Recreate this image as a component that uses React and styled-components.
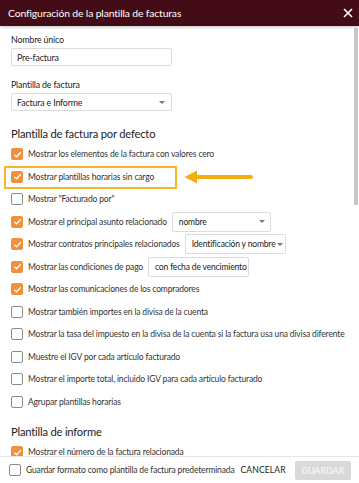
import styled, { createGlobalStyle } from "styled-components";

const Global = createGlobalStyle`
  html, body { margin: 0; padding: 0; background: #fff; }
  body { font-family: Lato, "Noto Sans", sans-serif; color: #333; }
  * { box-sizing: border-box; }
`;

const Dialog = styled.div`
  width: 359px;
  height: 483px;
  display: flex;
  flex-direction: column;
  overflow: hidden;
  background: #fff;
  position: relative;
`;

const Header = styled.div`
  height: 26px;
  flex: none;
  display: flex;
  align-items: center;
  justify-content: space-between;
  padding: 0 6px 0 8px;
  background: #430b16;
  color: #fff;
  font-size: 10.4px;
  letter-spacing: -0.15px;
  box-shadow: 0 1px 3px rgba(0, 0, 0, 0.25);
  position: relative;
  z-index: 1;
`;

const Body = styled.div`
  flex: 1;
  min-height: 0;
  overflow: hidden;
  padding: 8px 0 0 11px;
  letter-spacing: -0.15px;
`;

/* scroll thumb of the form area, drawn over the content */
const ScrollThumb = styled.div`
  position: absolute;
  right: 1px;
  top: 28px;
  width: 4px;
  height: 177px;
  border-radius: 1px;
  background: #c6c6c6;
`;

const Label = styled.div`
  font-size: 8.8px;
  line-height: 12px;
  color: #222;
  margin-bottom: 2px;
`;

const Field = styled.div`
  width: 161px;
  height: 18px;
  border: 1px solid #dcdcdc;
  border-radius: 2px;
  display: flex;
  align-items: center;
  justify-content: space-between;
  padding: 0 6px 0 5px;
  font-size: 8.8px;
  color: #222;
  margin-bottom: ${(p) => p.$mb || 0}px;
`;

const Caret = styled.span`
  width: 0;
  height: 0;
  border-left: 3px solid transparent;
  border-right: 3px solid transparent;
  border-top: 3px solid #777;
  flex: none;
  margin-left: 2px;
`;

const Heading = styled.div`
  font-size: 11.2px;
  line-height: 18px;
  letter-spacing: -0.2px;
  color: #222;
  margin: ${(p) => p.$mt}px 0 0;
`;

const Row = styled.div`
  height: 22.5px;
  display: flex;
  align-items: center;
  gap: 5px;
  font-size: 8.5px;
  color: #333;
  white-space: nowrap;
  position: relative;
`;

const Box = styled.span`
  width: 12px;
  height: 12px;
  flex: none;
  border-radius: 2px;
  border: 1px solid ${(p) => (p.$on ? "#f0913d" : "#8a8a8a")};
  background: ${(p) => (p.$on ? "#f0913d" : "#fff")};
  display: flex;
  align-items: center;
  justify-content: center;
`;

const Highlight = styled.span`
  position: absolute;
  left: -7px;
  top: 0;
  width: 173px;
  height: 23px;
  border: 2px solid #f7b52a;
`;

const Arrow = styled.svg`
  position: absolute;
  left: 173px;
  top: 4px;
`;

const InlineSelect = styled.div`
  height: 20px;
  width: ${(p) => p.$w}px;
  border: 1px solid #dcdcdc;
  border-radius: 2px;
  display: flex;
  align-items: center;
  justify-content: space-between;
  padding: 0 5px 0 6px;
  font-size: 8.5px;
  color: #222;
  overflow: hidden;
`;

const Footer = styled.div`
  height: 27px;
  flex: none;
  display: flex;
  align-items: center;
  padding: 0 8px 0 9px;
  border-top: 1px solid #e6e6e6;
  font-size: 8.5px;
  letter-spacing: -0.15px;
  color: #333;
  white-space: nowrap;
`;

const FooterText = styled.span`
  margin-left: 5px;
`;

const Cancel = styled.span`
  margin-left: 6px;
  font-size: 8.6px;
  color: #222;
  letter-spacing: 0.1px;
`;

const Save = styled.button`
  margin-left: auto;
  width: 56px;
  height: 19px;
  border: none;
  border-radius: 2px;
  background: #d9d9d9;
  color: #f4f4f4;
  font-family: inherit;
  font-size: 8.8px;
  font-weight: 700;
  padding: 0;
`;

const Check = () => (
  <svg width="9" height="9" viewBox="0 0 10 10">
    <path d="M1.5 5.2 L4 7.5 L8.6 2.5" fill="none" stroke="#fff" strokeWidth="1.4" />
  </svg>
);

const Item = ({ on, children, extra }) => (
  <Row>
    <Box $on={on}>{on && <Check />}</Box>
    <span>{children}</span>
    {extra}
  </Row>
);

const Sel = ({ w, children }) => (
  <InlineSelect $w={w}>
    <span>{children}</span>
    <Caret />
  </InlineSelect>
);

export default function App() {
  return (
    <Dialog>
      <Global />
      <Header>
        <span>Configuración de la plantilla de facturas</span>
        <svg width="10" height="10" viewBox="0 0 10 10">
          <path d="M1 1 L9 9 M9 1 L1 9" stroke="#fff" strokeWidth="1.6" />
        </svg>
      </Header>
      <Body>
        <Label>Nombre único</Label>
        <Field $mb={13}>Pre-factura</Field>
        <Label>Plantilla de factura</Label>
        <Field>
          <span>Factura e Informe</span>
          <Caret />
        </Field>
        <Heading $mt={14}>Plantilla de factura por defecto</Heading>
        <Item on>Mostrar los elementos de la factura con valores cero</Item>
        <Row>
          <Highlight />
          <Box $on>
            <Check />
          </Box>
          <span>Mostrar plantillas horarias sin cargo</span>
          <Arrow width="70" height="14" viewBox="0 0 70 14">
            <path d="M11 7 H67" stroke="#f5ad0f" strokeWidth="4" strokeLinecap="round" />
            <path d="M13 0.5 L0.5 7 L13 13.5 Z" fill="#f5ad0f" />
          </Arrow>
        </Row>
        <Item>Mostrar "Facturado por"</Item>
        <Item on extra={<Sel w={99}>nombre</Sel>}>
          Mostrar el principal asunto relacionado
        </Item>
        <Item on extra={<Sel w={101}>Identificación y nombre</Sel>}>
          Mostrar contratos principales relacionados
        </Item>
        <Item on extra={<Sel w={101}>con fecha de vencimiento</Sel>}>
          Mostrar las condiciones de pago
        </Item>
        <Item on>Mostrar las comunicaciones de los compradores</Item>
        <Item>Mostrar también importes en la divisa de la cuenta</Item>
        <Item>
          Mostrar la tasa del impuesto en la divisa de la cuenta si la factura usa una divisa diferente
        </Item>
        <Item>Muestre el IGV por cada artículo facturado</Item>
        <Item>Mostrar el importe total, incluido IGV para cada artículo facturado</Item>
        <Item>Agrupar plantillas horarias</Item>
        <Heading $mt={10}>Plantilla de informe</Heading>
        <Item on>Mostrar el número de la factura relacionada</Item>
      </Body>
      <ScrollThumb />
      <Footer>
        <Box />
        <FooterText>Guardar formato como plantilla de factura predeterminada</FooterText>
        <Cancel>CANCELAR</Cancel>
        <Save>GUARDAR</Save>
      </Footer>
    </Dialog>
  );
}
